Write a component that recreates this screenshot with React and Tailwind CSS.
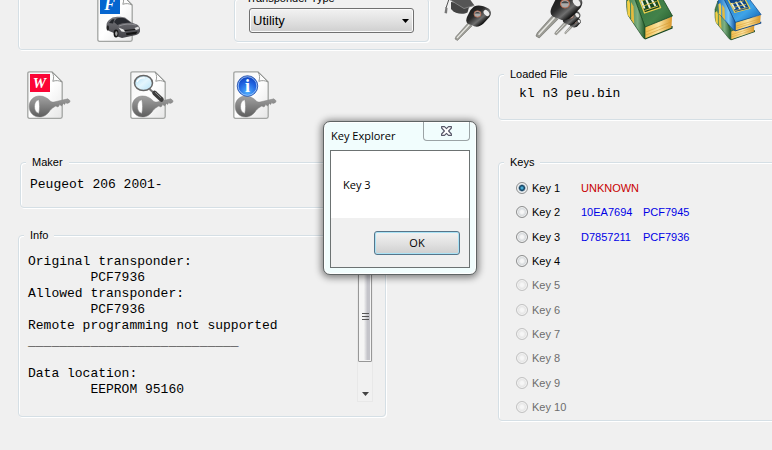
import React from "react";

const BOX =
  "min-w-0 rounded-[4px] border border-[#d5dfe5] shadow-[1px_1px_0_#fff,inset_1px_1px_0_#fff]";
const LEGEND = "ml-[5px] bg-[#f0f0f0] px-[6px] text-[11px] leading-[14px]";
const MONO = "font-['Liberation_Mono','Courier_New',monospace] text-[13px] leading-4";

const KEYS = [
  { name: "Key 1", id: "UNKNOWN", tone: "text-[#c80000]" },
  { name: "Key 2", id: "10EA7694", chip: "PCF7945", tone: "text-[#0000e6]" },
  { name: "Key 3", id: "D7857211", chip: "PCF7936", tone: "text-[#0000e6]" },
  { name: "Key 4" },
  { name: "Key 5", off: true },
  { name: "Key 6", off: true },
  { name: "Key 7", off: true },
  { name: "Key 8", off: true },
  { name: "Key 9", off: true },
  { name: "Key 10", off: true },
];

const INFO = `Original transponder:
        PCF7936
Allowed transponder:
        PCF7936
Remote programming not supported
___________________________

Data location:
        EEPROM 95160`;

function GroupBox({ title, className = "", children }) {
  return (
    <fieldset className={`${BOX} ${className}`}>
      <legend className={LEGEND}>{title}</legend>
      {children}
    </fieldset>
  );
}

function Defs() {
  return (
    <svg width="0" height="0" className="absolute" aria-hidden="true">
      <defs>
        <linearGradient id="paper" x1="0" y1="0" x2="1" y2="1">
          <stop offset="0" stopColor="#f4f4f4" />
          <stop offset=".5" stopColor="#fff" />
          <stop offset="1" stopColor="#e6e6e6" />
        </linearGradient>
        <linearGradient id="steel" x1="0" y1="0" x2="0" y2="1">
          <stop offset="0" stopColor="#a2a2a2" />
          <stop offset="1" stopColor="#5e5e5e" />
        </linearGradient>
        <linearGradient id="lens" x1="0" y1="0" x2="1" y2="1">
          <stop offset="0" stopColor="#a9dcf5" />
          <stop offset=".5" stopColor="#e4f6fd" />
          <stop offset="1" stopColor="#b4e2f7" />
        </linearGradient>
        <radialGradient id="infoBlue" cx=".5" cy=".8" r=".8">
          <stop offset="0" stopColor="#4fb0ff" />
          <stop offset=".6" stopColor="#1f62e0" />
          <stop offset="1" stopColor="#0d3fb8" />
        </radialGradient>
        <linearGradient id="fob" x1="0" y1="0" x2="1" y2="1">
          <stop offset="0" stopColor="#111" />
          <stop offset=".4" stopColor="#2a2a2a" />
          <stop offset=".6" stopColor="#6f6f6f" />
          <stop offset=".75" stopColor="#151515" />
          <stop offset="1" stopColor="#000" />
        </linearGradient>
        <linearGradient id="carPaint" x1="0" y1="0" x2="0" y2="1">
          <stop offset="0" stopColor="#77777c" />
          <stop offset="1" stopColor="#424247" />
        </linearGradient>
        <linearGradient id="greenCover" x1="0" y1="0" x2="1" y2="1">
          <stop offset="0" stopColor="#2d6b35" />
          <stop offset=".7" stopColor="#43824a" />
          <stop offset="1" stopColor="#245a2b" />
        </linearGradient>
        <linearGradient id="greenSpine" x1="0" y1="0" x2="1" y2="0">
          <stop offset="0" stopColor="#3d7a42" />
          <stop offset=".6" stopColor="#7eb083" />
          <stop offset="1" stopColor="#245a2b" />
        </linearGradient>
        <linearGradient id="blueCover" x1="0" y1="0" x2="1" y2="1">
          <stop offset="0" stopColor="#1560b0" />
          <stop offset=".65" stopColor="#3fa4e8" />
          <stop offset="1" stopColor="#0f5cae" />
        </linearGradient>
        <linearGradient id="blueSpine" x1="0" y1="0" x2="1" y2="0">
          <stop offset="0" stopColor="#1c6fc0" />
          <stop offset=".6" stopColor="#7cc8f5" />
          <stop offset="1" stopColor="#1257a5" />
        </linearGradient>
        <linearGradient id="pages" x1="0" y1="0" x2="1" y2="0">
          <stop offset="0" stopColor="#f0bd4c" />
          <stop offset=".5" stopColor="#fbe3a0" />
          <stop offset="1" stopColor="#d9982a" />
        </linearGradient>
      </defs>
    </svg>
  );
}

function Paper() {
  return (
    <g>
      <path d="M2.500 .8H25L35.200 11V45.500Q35.200 47.300 33.400 47.300H2.500Q.8 47.300 .8 45.500V2.500Q.8 .8 2.500 .8Z" fill="url(#paper)" stroke="#a3a5a3" strokeWidth="1.300" />
      <path d="M25 1C27 4 27 7 25.800 10.300C29 9.200 32 9.400 35 11Z" fill="#fcfcfc" stroke="#8f918f" strokeWidth=".9" />
    </g>
  );
}

function PlainKey() {
  return (
    <path
      fillRule="evenodd"
      fill="url(#steel)"
      stroke="#808080"
      strokeWidth=".5"
      d="M12.500 25C17 25 20.500 27 23.500 30.200C25 31 26 31.200 27 31L41 27.800L43.200 30L42.200 31.700L40 32.500L38.800 31.600L37.500 33.600L36.200 32.500L34.500 35L32.800 33.600L31 36L28.800 35C26.500 36.400 24.500 37.500 23 39.500C20.500 43.500 17 46 12.500 46C6.500 46 2.200 41.500 2.200 35.500S6.500 25 12.500 25ZM11.800 28.500C8.800 29.500 7.500 32 7.500 35.500S8.800 41.500 11.800 42.500C12.800 38 12.800 33 11.800 28.500Z"
    />
  );
}

function Letter({ x, y, size, children, fill = "#fff" }) {
  return (
    <text x={x} y={y} fontSize={size} fill={fill} textAnchor="middle" fontStyle="italic" fontWeight="bold" fontFamily="Liberation Serif, serif">
      {children}
    </text>
  );
}

function WriteIcon() {
  return (
    <svg width="48" height="49" viewBox="0 0 48 49" className="block">
      <Paper />
      <rect x="3" y="3" width="20" height="18" fill="#fb0535" />
      <Letter x={12.5} y={17} size={15}>W</Letter>
      <PlainKey />
    </svg>
  );
}

function SearchIcon() {
  return (
    <svg width="48" height="49" viewBox="0 0 48 49" className="block">
      <Paper />
      <PlainKey />
      <path d="M19.500 18L25 23" stroke="#777" strokeWidth="2" />
      <path d="M24.500 22L31.500 28.500" stroke="#3c3c3c" strokeWidth="4.500" strokeLinecap="round" />
      <path d="M25 21.200L31 26.800" stroke="#8d8d8d" strokeWidth="1" />
      <ellipse cx="13.500" cy="12" rx="9" ry="7.600" fill="url(#lens)" stroke="#666" strokeWidth="1.500" />
      <path d="M7 11C8.500 7.500 12 6.500 15 7" fill="none" stroke="#fff" strokeWidth="1.200" />
    </svg>
  );
}

function InfoIcon() {
  return (
    <svg width="48" height="49" viewBox="0 0 48 49" className="block">
      <Paper />
      <PlainKey />
      <circle cx="14.500" cy="15" r="10.300" fill="url(#infoBlue)" stroke="#2451a8" strokeWidth=".8" />
      <circle cx="14.500" cy="15" r="9.300" fill="none" stroke="#a9cdfa" strokeWidth=".8" />
      <text x="14.500" y="21" fontSize="18" fontWeight="bold" textAnchor="middle" fill="#fff" fontFamily="Liberation Serif, serif">i</text>
    </svg>
  );
}

function CarIcon() {
  return (
    <svg width="48" height="48" viewBox="0 0 48 48" className="block">
      <Paper />
      <rect x="3" y="2" width="20" height="18" fill="#0565cf" />
      <Letter x={12.5} y={16} size={16}>F</Letter>
      <path d="M9.500 31.500C9.500 29 10.300 27.500 12 26L15.500 23.500C19 22.400 25 22.500 28 23.500L34.500 28.500L40 30.500C42.500 32 43.300 34 43 37.500C42 40 40 41.200 37 41.500L25 44L20.500 42.500L17 39L12 37L9.800 35Z" fill="url(#carPaint)" />
      <path d="M19.500 24.500C23 23.800 26 24 28 24.500L34 28.800C29 28.300 24.500 29 20.500 31L17 28Z" fill="#292b31" />
      <path d="M12 29L15 25.500L17.500 25L16 29.500Z" fill="#24262b" />
      <path d="M22 32C27 29.800 33 29.600 39 31" stroke="#98989d" strokeWidth=".8" fill="none" />
      <path d="M21.500 33.500L26.500 35.500L28 38L24.500 37.500Z" fill="#e9e9e9" />
      <path d="M37.500 34L41.500 32.500L42 35L39 36Z" fill="#ddd" />
      <path d="M29 39L40.500 37.500L39 40L29.500 41.300Z" fill="#151515" />
      <path d="M28 36.500L38 35.500" stroke="#111" strokeWidth="1.200" />
      <ellipse cx="19" cy="39.500" rx="2.400" ry="4" fill="#161616" />
      <ellipse cx="19.300" cy="39.600" rx="1.200" ry="2.400" fill="#a0a0a0" />
      <ellipse cx="10.800" cy="34" rx="1.200" ry="2.700" fill="#222" />
    </svg>
  );
}

function CarKey({ transform }) {
  return (
    <g transform={transform}>
      <path d="M25 29L29 32L17.500 43.500L14.500 46.500L12 45L13 42.500Z" fill="#9b9b94" stroke="#6b6b66" strokeWidth=".5" />
      <path d="M26.500 30.500L14 44" stroke="#e8e8e4" strokeWidth="1.200" />
      <path d="M31 12.500C35 10.800 40 11.500 45.500 14.500C48.500 17 48.500 20 46.500 23L40.500 29.500C38 32 35 33 32 32.500L25.500 30C23 28.500 22.800 26 24 23L27.500 16Z" fill="url(#fob)" />
      <ellipse cx="43.500" cy="19" rx="3.500" ry="2.300" transform="rotate(48 43.500 19)" fill="#ececec" />
      <ellipse cx="34.500" cy="20" rx="3.500" ry="3.200" fill="#aaa" stroke="#b9674b" strokeWidth=".8" />
      <path d="M31.500 19.500C33 17.500 36 17.500 37.500 19.500Z" fill="#444" />
    </g>
  );
}

function LearnKeyIcon() {
  return (
    <svg width="48" height="48" viewBox="0 0 48 48" className="block">
      <path d="M8 8V15C12 20 20 21 24.500 18.500L27 10Z" fill="#444" />
      <path d="M3 3L20 -4L31.500 11.500L21 15Z" fill="#555" />
      <path d="M4 4L21 14.500L31 11.500" fill="none" stroke="#8b8b8b" strokeWidth=".8" />
      <path d="M6 5L3 14" stroke="#555" strokeWidth="1" />
      <path d="M2.500 13L4.500 14L4 19.500L1.500 19Z" fill="#777" />
      <CarKey />
    </svg>
  );
}

function MultiKeyIcon() {
  return (
    <svg width="48" height="48" viewBox="0 0 48 48" className="block overflow-visible">
      <CarKey transform="translate(25 18.500) scale(.46)" />
      <CarKey transform="translate(12 7.500) scale(.72)" />
      <CarKey transform="translate(-13.500 -16) scale(1.290)" />
    </svg>
  );
}

function Book({ cover, spine, edge, transform }) {
  return (
    <g transform={transform}>
      <path d="M20 33L47 22.500L46.500 34L20 45Z" fill="url(#pages)" />
      <path d="M21 38L46 28M21 41L46 31" stroke="#d49c36" strokeWidth=".6" />
      <path d="M5 -8L27 -14L47.500 22L20 33Z" fill={`url(#${cover})`} stroke={edge} strokeWidth=".8" />
      <path d="M5 -8L20 33L20 45L18 43.500L3.500 22C1.800 18 1.500 12 1.800 3Z" fill={`url(#${spine})`} stroke={edge} strokeWidth=".7" />
      <path d="M20 45L47 34V32" fill="none" stroke={edge} strokeWidth="1.200" />
      <path d="M2 7.500L4 5.500L5 9.500L5 24L2.500 20.500Z" fill="#f3cf45" />
      <path d="M6 8L8.500 12.500L9.200 30L6.200 25.500Z" fill="#e4bb3e" />
      <path d="M11 -3L27 -8L35.500 13.500L19.500 19Z" fill={edge} stroke="#ecd04f" strokeWidth="1.300" />
      <path d="M16 5.500L19.500 14.500M20.500 4L25 14M25 2.500L30.500 12" stroke="#e9efdf" strokeWidth="1.900" />
      <path d="M16 7L29 2.500M18 12L31.500 7.500M19.500 16.500L33 12" stroke="#e6c44a" strokeWidth=".9" />
    </g>
  );
}

function BookIcon() {
  return (
    <svg width="48" height="48" viewBox="0 0 48 48" className="block">
      <Book cover="greenCover" spine="greenSpine" edge="#174720" />
    </svg>
  );
}

function BooksIcon() {
  return (
    <svg width="48" height="48" viewBox="0 0 48 48" className="block overflow-visible">
      <Book cover="greenCover" spine="greenSpine" edge="#174720" transform="translate(-2.500 13) scale(.87 .73)" />
      <Book cover="blueCover" spine="blueSpine" edge="#0d4488" transform="translate(.5 5) scale(.94 .71)" />
    </svg>
  );
}

function IconButton({ label, children, className = "" }) {
  return (
    <button type="button" aria-label={label} className={`w-12 shrink-0 ${className}`}>
      {children}
    </button>
  );
}

function Toolbar() {
  return (
    <header className="-mr-1 -mt-[10px] ml-[18px] flex h-[60px] items-end rounded-[4px] border border-[#d5dfe5] pb-[7px] pl-[78px] shadow-[1px_1px_0_#fff,inset_1px_0_0_#fff]">
      <IconButton label="Open car file"><CarIcon /></IconButton>
      <fieldset className={`${BOX} ml-[89px] w-[195px] shrink-0 px-[14px] pb-2`}>
        <legend className="-ml-[9px] bg-[#f0f0f0] px-[6px] text-[11px] leading-[14px]">
          <label htmlFor="transponder">Transponder Type</label>
        </legend>
        <div className="relative mt-[3px]">
          <select
            id="transponder"
            defaultValue="Utility"
            className="block h-[25px] w-[165px] appearance-none rounded-[3px] border border-[#707070] bg-linear-to-b from-[#f2f2f2] via-[#e2e2e2] via-50% to-[#cfcfcf] pl-[3px] text-[13px] leading-4 text-black shadow-[inset_0_0_0_1px_#fafafa]"
          >
            <option>Utility</option>
          </select>
          <svg width="7" height="4" viewBox="0 0 7 4" className="pointer-events-none absolute right-[5px] top-[11px]">
            <path d="M0 0H7L3.500 4Z" fill="#000" />
          </svg>
        </div>
      </fieldset>
      <div className="ml-[14px] flex gap-[43px]">
        <IconButton label="Learn key"><LearnKeyIcon /></IconButton>
        <IconButton label="All keys"><MultiKeyIcon /></IconButton>
        <IconButton label="Manual"><BookIcon /></IconButton>
        <IconButton label="Library"><BooksIcon /></IconButton>
      </div>
    </header>
  );
}

function ScrollBar() {
  return (
    <div className="flex w-4 shrink-0 flex-col border border-[#e8e8e8] bg-[#f1f1f1]" aria-hidden="true">
      <div className="h-[15px]" />
      <div className="flex h-[92px] flex-col items-center justify-center gap-[2px] rounded-[1px] border border-[#979797] bg-linear-to-r from-[#f5f5f5] from-40% to-[#c4c4ca] to-70% shadow-[inset_0_0_0_1px_#f4f4f4]">
        <span className="h-px w-[7px] bg-[#555]" />
        <span className="h-px w-[7px] bg-[#555]" />
        <span className="h-px w-[7px] bg-[#555]" />
      </div>
      <div className="flex flex-1 items-end justify-center pb-[5px]">
        <svg width="7" height="4" viewBox="0 0 7 4"><path d="M0 0H7L3.500 4Z" fill="#444" /></svg>
      </div>
    </div>
  );
}

function KeyRow({ item, first }) {
  const id = item.name.replace(" ", "-").toLowerCase();
  return (
    <li className="flex h-4 items-center">
      <input
        id={id}
        type="radio"
        name="key"
        defaultChecked={first}
        disabled={item.off}
        className="peer size-3 shrink-0 appearance-none rounded-full border border-[#8e8f8f] bg-radial from-[#f6f6f6] from-20% to-[#cfd3d6] to-60% shadow-[inset_0_0_0_1px_#f4f4f4] checked:from-[#59c4ee] checked:from-5% checked:via-[#10405f] checked:via-35% checked:to-[#dfe6ea] checked:to-55% disabled:border-[#c2c2c2] disabled:to-[#e2e2e2]"
      />
      <label htmlFor={id} className="ml-1 w-[49px] peer-disabled:text-[#6d6d6d]">{item.name}</label>
      <span className={`w-[62px] ${item.tone || ""}`}>{item.id}</span>
      <span className={item.tone || ""}>{item.chip}</span>
    </li>
  );
}

function MessageBox() {
  return (
    <div
      role="dialog"
      aria-labelledby="dialog-title"
      className="absolute left-[323px] top-[121px] w-[154px] rounded-[7px] border border-[#5f6464] bg-[#f1fdfd] px-[6px] pb-[6px] font-['Open_Sans','Segoe_UI',sans-serif] text-[11px] leading-4 shadow-[0_1px_7px_2px_rgba(0,0,0,0.45),inset_0_0_0_1px_#fff]"
    >
      <div className="flex h-7 items-start justify-between">
        <h1 id="dialog-title" className="ml-px mt-[6px] whitespace-nowrap">Key Explorer</h1>
        <button type="button" aria-label="Close" className="flex h-[19px] w-[47px] items-center justify-center rounded-b-[4px] border border-t-0 border-[#9ba3a5]">
          <svg width="11" height="10" viewBox="0 0 11 10">
            <path d="M.6 .6H3.500L5.500 2.600L7.500 .6H10.400V2L7.600 5L10.400 8V9.400H7.500L5.500 7.400L3.500 9.400H.6V8L3.400 5L.6 2Z" fill="#fff" stroke="#555566" strokeWidth="1.100" strokeLinejoin="round" />
          </svg>
        </button>
      </div>
      <div className="border border-[#6c7272] bg-[#f0f0f0]">
        <p className="bg-white pb-[25px] pl-3 pt-[26px]">Key 3</p>
        <div className="flex justify-end px-[9px] pb-3 pt-[13px]">
          <button type="button" className="h-6 w-[86px] rounded-[3px] border border-[#56758a] bg-linear-to-b from-[#f2f2f2] via-[#e2e2e2] via-50% to-[#cfcfcf] shadow-[inset_0_0_0_1px_#a9e2f5]">
            OK
          </button>
        </div>
      </div>
    </div>
  );
}

export default function App() {
  return (
    <div className="relative flex min-h-screen flex-col overflow-hidden bg-[#f0f0f0] font-['Liberation_Sans',Arial,sans-serif] text-[11px] leading-[14px] text-black">
      <Defs />
      <Toolbar />
      <main className="-mr-1 mt-px grid grid-cols-[368px_minmax(0,1fr)] gap-x-28 pl-[18px]">
        <div className="flex flex-col pt-5">
          <div className="flex gap-[55px] pl-[9px]">
            <IconButton label="Write key"><WriteIcon /></IconButton>
            <IconButton label="Find key"><SearchIcon /></IconButton>
            <IconButton label="Key info"><InfoIcon /></IconButton>
          </div>
          <GroupBox title="Maker" className="ml-[2px] mt-[35px] h-[53px] pt-2">
            <p className={`${MONO} pl-[9px]`}>Peugeot 206 2001-</p>
          </GroupBox>
          <GroupBox title="Info" className="mt-5 pb-[14px] pt-3">
            <div className="flex justify-between pl-[9px] pr-3">
              <pre className={`${MONO} pb-1`}>{INFO}</pre>
              <ScrollBar />
            </div>
          </GroupBox>
        </div>
        <div className="flex flex-col gap-[35px] pt-4">
          <GroupBox title="Loaded File" className="pb-[17px] pt-[5px]">
            <p className={`${MONO} pl-5`}>kl n3 peu.bin</p>
          </GroupBox>
          <GroupBox title="Keys" className="pb-[5px] pt-[11px]">
            <ul className="flex h-[235px] flex-col justify-between pl-[17px]">
              {KEYS.map((item, i) => (
                <KeyRow key={item.name} item={item} first={i === 0} />
              ))}
            </ul>
          </GroupBox>
        </div>
      </main>
      <MessageBox />
    </div>
  );
}
